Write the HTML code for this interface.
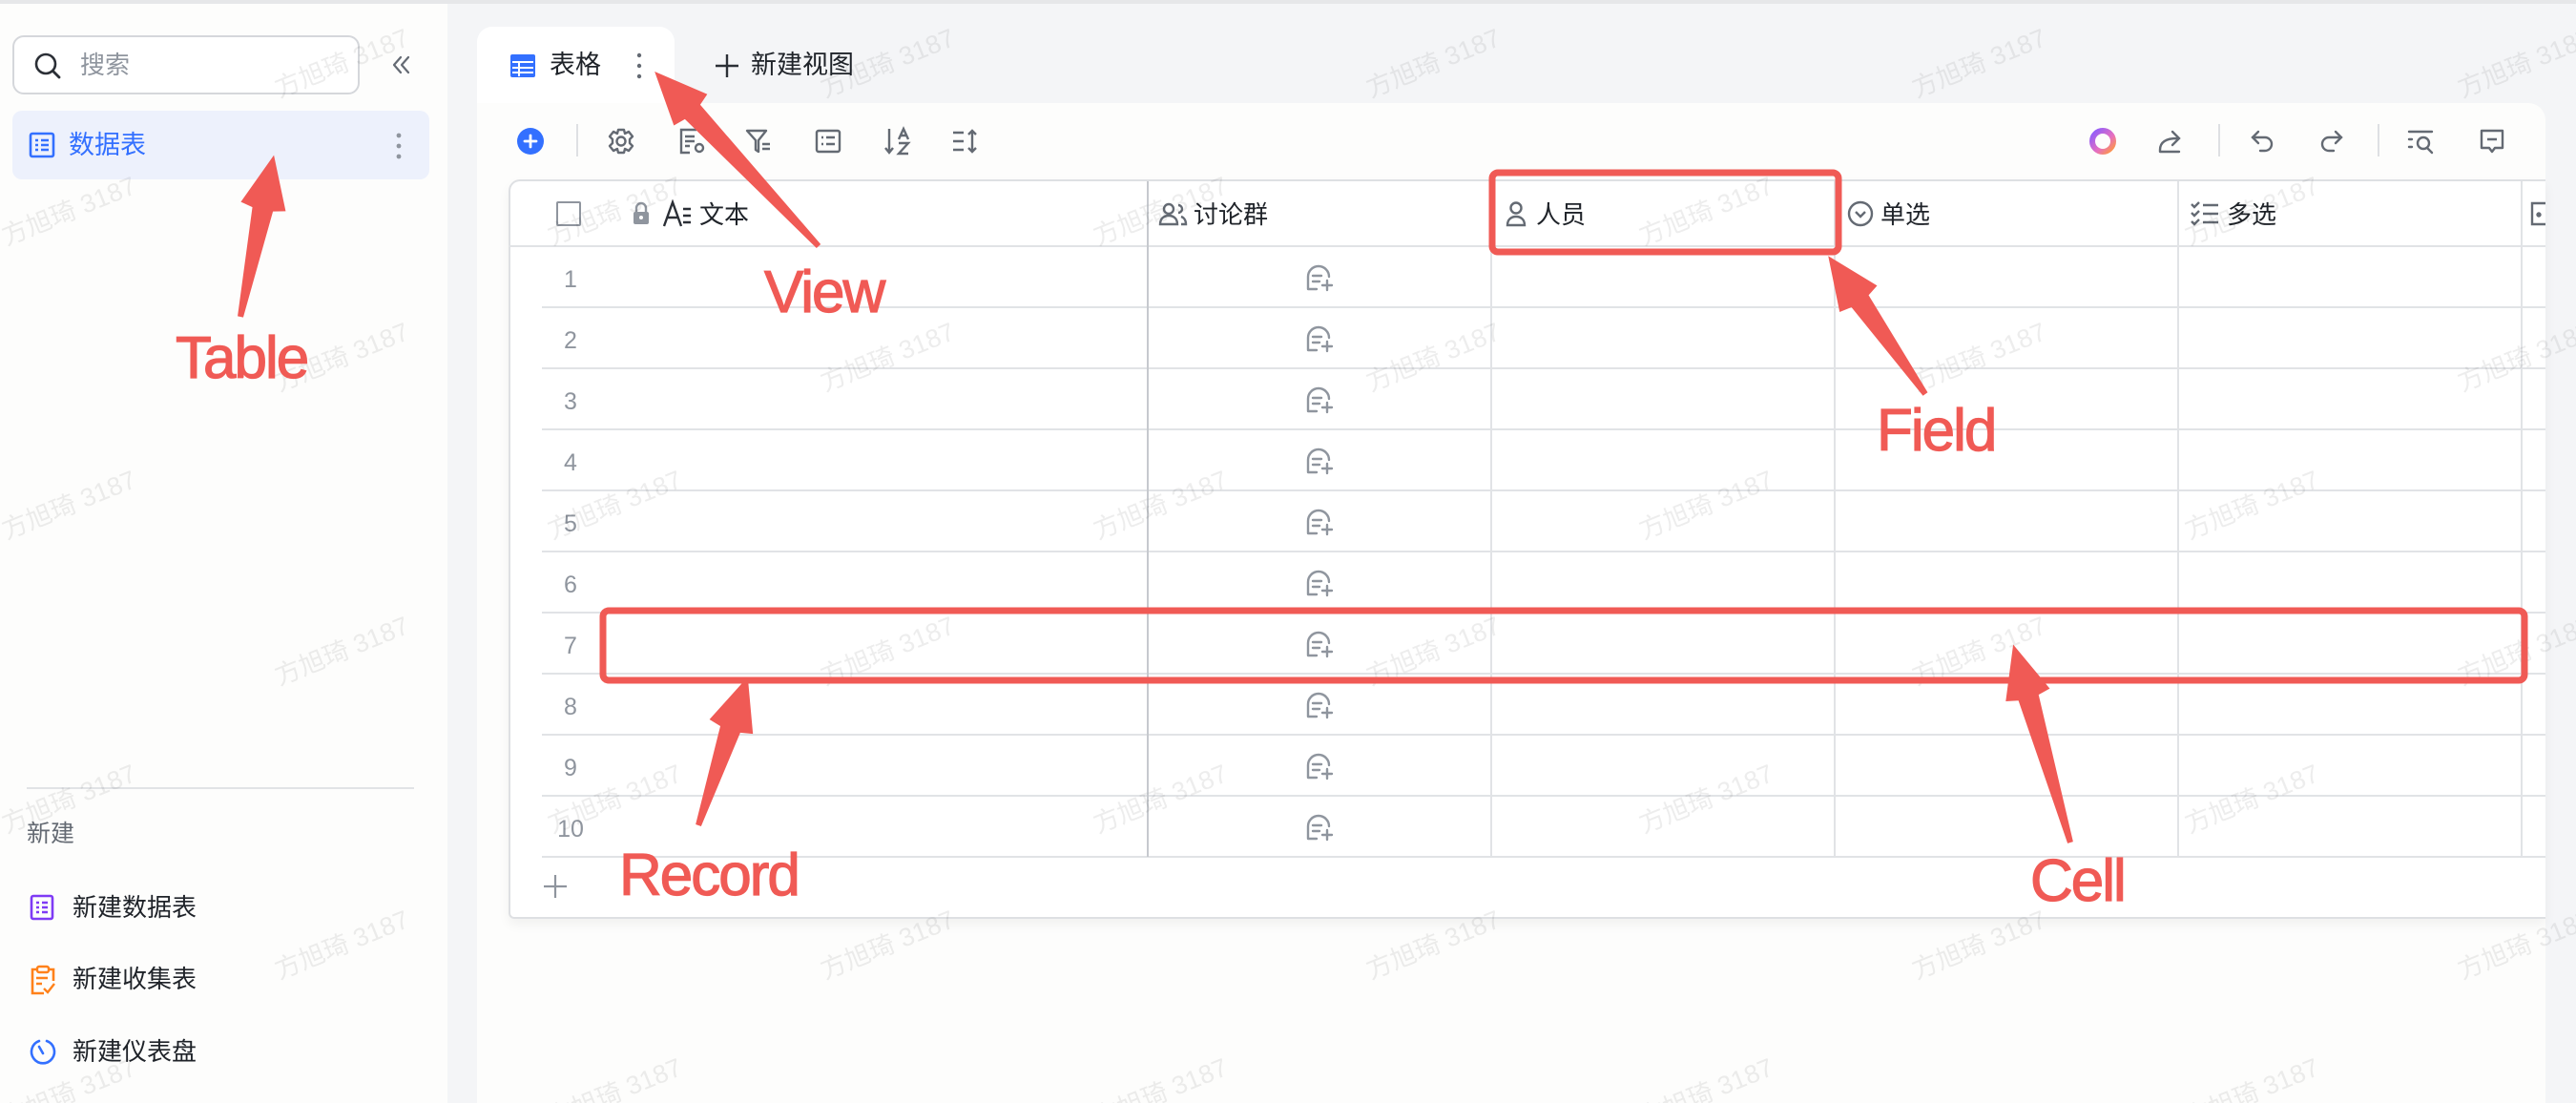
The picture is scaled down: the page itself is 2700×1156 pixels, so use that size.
<!DOCTYPE html>
<html><head><meta charset="utf-8">
<style>
*{margin:0;padding:0;box-sizing:border-box}
body{width:2700px;height:1156px;overflow:hidden;position:relative;background:#f4f5f7;font-family:"Liberation Sans","Noto Sans CJK SC",sans-serif;color:#1f2329}
.abs{position:absolute}
.t{position:absolute;font-size:26px;line-height:30px;white-space:nowrap}
.hl{position:absolute;height:2px;background:#e1e3e6}
.vl{position:absolute;width:2px;background:#e1e3e6}
.num{position:absolute;left:578px;width:40px;text-align:center;font-size:25px;color:#8f959e;line-height:30px}
.ic{position:absolute}
</style></head><body>
<div class="abs" style="left:0;top:0;width:2700px;height:4px;background:#e6e7e9"></div>
<div class="abs" style="left:0;top:4px;width:469px;height:1152px;background:#fdfdfc"></div>
<div class="abs" style="left:13px;top:37px;width:364px;height:62px;border:2px solid #d5d7db;border-radius:12px;background:#fff"></div>
<svg class="ic" style="left:34px;top:53px" width="32" height="32" viewBox="0 0 32 32"><circle cx="14" cy="14" r="10" fill="none" stroke="#2b2f36" stroke-width="2.6"/><path d="M21.5 21.5 L28 28" stroke="#2b2f36" stroke-width="2.8" stroke-linecap="round"/></svg>
<div class="t" style="left:84px;top:53px;color:#8f959e">搜索</div>
<svg class="ic" style="left:408px;top:55px" width="26" height="26" viewBox="0 0 26 26"><path d="M12 5 L5 13 L12 21 M20 5 L13 13 L20 21" fill="none" stroke="#646a73" stroke-width="2.2" stroke-linecap="round" stroke-linejoin="round"/></svg>
<div class="abs" style="left:13px;top:116px;width:437px;height:72px;background:#edf1fc;border-radius:10px"></div>
<svg class="ic" style="left:30px;top:138px" width="28" height="28" viewBox="0 0 28 28"><rect x="2" y="2" width="24" height="24" rx="2" fill="none" stroke="#3370ff" stroke-width="2.6"/><path d="M7 9h3M13 9h8M7 14h3M13 14h8M7 19h3M13 19h8" stroke="#3370ff" stroke-width="2.4"/></svg>
<div class="t" style="left:72px;top:137px;color:#3370ff;font-size:27px">数据表</div>
<svg class="ic" style="left:412px;top:138px" width="12" height="30" viewBox="0 0 12 30"><circle cx="6" cy="4" r="2.4" fill="#8f959e"/><circle cx="6" cy="15" r="2.4" fill="#8f959e"/><circle cx="6" cy="26" r="2.4" fill="#8f959e"/></svg>
<div class="abs" style="left:28px;top:825px;width:406px;height:2px;background:#e1e3e6"></div>
<div class="t" style="left:28px;top:859px;color:#646a73;font-size:25px">新建</div>
<svg class="ic" style="left:30px;top:937px" width="28" height="28" viewBox="0 0 28 28"><rect x="3" y="2" width="22" height="24" rx="2" fill="none" stroke="#7f3bf5" stroke-width="2.6"/><path d="M8 9h3M14 9h6M8 14h3M14 14h6M8 19h3M14 19h6" stroke="#7f3bf5" stroke-width="2.4"/></svg>
<div class="t" style="left:76px;top:936px">新建数据表</div>
<svg class="ic" style="left:30px;top:1011px" width="30" height="32" viewBox="0 0 30 32"><path d="M9 5H4v25h12M21 5h5v12" fill="none" stroke="#ff811a" stroke-width="2.6"/><rect x="9" y="2" width="12" height="6" rx="2" fill="none" stroke="#ff811a" stroke-width="2.4"/><path d="M8 14h12M8 20h6M16 25l4 4 7-9" fill="none" stroke="#ff811a" stroke-width="2.4"/></svg>
<div class="t" style="left:76px;top:1011px">新建收集表</div>
<svg class="ic" style="left:30px;top:1087px" width="30" height="30" viewBox="0 0 30 30"><path d="M11 4 A12 12 0 1 0 19 4" fill="none" stroke="#3370ff" stroke-width="2.6" stroke-linecap="round"/><path d="M11 10 L15 17" stroke="#3370ff" stroke-width="2.6" stroke-linecap="round"/></svg>
<div class="t" style="left:76px;top:1087px">新建仪表盘</div>

<div class="abs" style="left:500px;top:28px;width:207px;height:100px;background:#fff;border-radius:16px 16px 0 0"></div>
<svg class="ic" style="left:534px;top:55px" width="28" height="28" viewBox="0 0 28 28"><rect x="1" y="2" width="26" height="24" rx="2" fill="#3370ff"/><path d="M3 10h22M3 16h22M3 21h22M10 10v15" stroke="#fff" stroke-width="2"/></svg>
<div class="t" style="left:576px;top:53px;font-size:27px">表格</div>
<svg class="ic" style="left:664px;top:54px" width="12" height="30" viewBox="0 0 12 30"><circle cx="6" cy="4" r="2.2" fill="#646a73"/><circle cx="6" cy="15" r="2.2" fill="#646a73"/><circle cx="6" cy="26" r="2.2" fill="#646a73"/></svg>
<svg class="ic" style="left:748px;top:55px" width="28" height="28" viewBox="0 0 28 28"><path d="M14 2v24M2 14h24" stroke="#2b2f36" stroke-width="2.4"/></svg>
<div class="t" style="left:787px;top:53px;font-size:27px">新建视图</div>

<div class="abs" style="left:500px;top:108px;width:2168px;height:1048px;background:#fdfdfc;border-radius:0 18px 0 0"></div>
<div class="abs" style="left:533px;top:188px;width:2135px;height:775px;background:#fff;box-shadow:0 6px 12px rgba(0,0,0,0.05);border-radius:12px 0 0 6px"></div>
<svg class="ic" style="left:541px;top:133px" width="30" height="30" viewBox="0 0 30 30"><circle cx="15" cy="15" r="14" fill="#3370ff"/><path d="M15 9v12M9 15h12" stroke="#fff" stroke-width="2.8" stroke-linecap="round"/></svg>
<div class="abs" style="left:604px;top:130px;width:2px;height:34px;background:#dee0e3"></div>
<svg class="ic" style="left:636px;top:133px" width="30" height="30" viewBox="0 0 30 30" fill="none" stroke="#646a73" stroke-width="2.4" stroke-linejoin="round"><path d="M12 3h6l1 4 4-2 4 5-3 3 0 4 3 3-4 5-4-2-1 4h-6l-1-4-4 2-4-5 3-3 0-4-3-3 4-5 4 2z"/><circle cx="15" cy="15" r="4.5"/></svg>
<svg class="ic" style="left:710px;top:133px" width="32" height="30" viewBox="0 0 32 30" fill="none" stroke="#646a73" stroke-width="2.4"><path d="M20 3H4v24h9M8 10h10M8 15h10M8 20h5"/><circle cx="23" cy="22" r="4" /></svg>
<svg class="ic" style="left:780px;top:133px" width="32" height="30" viewBox="0 0 32 30" fill="none" stroke="#646a73" stroke-width="2.4" stroke-linejoin="round"><path d="M3 4h20l-8 10v12l-3-2V14z M19 18h8M19 23h8"/></svg>
<svg class="ic" style="left:853px;top:133px" width="30" height="30" viewBox="0 0 30 30" fill="none" stroke="#646a73" stroke-width="2.4"><rect x="3" y="4" width="24" height="22" rx="2"/><path d="M8 11h2M13 11h9M8 18h2M13 18h9"/></svg>
<svg class="ic" style="left:925px;top:131px" width="32" height="34" viewBox="0 0 32 34" fill="none" stroke="#646a73" stroke-width="2.4"><path d="M7 4v24M3 24l4 5 4-5M17 15l5-11 5 11M19 11h6M17 19h10L17 30h10"/></svg>
<svg class="ic" style="left:996px;top:133px" width="32" height="30" viewBox="0 0 32 30" fill="none" stroke="#646a73" stroke-width="2.4"><path d="M3 6h11M3 15h11M3 24h11M23 4v22M19 8l4-4 4 4M19 22l4 4 4-4"/></svg>
<svg class="ic" style="left:2189px;top:133px" width="30" height="30" viewBox="0 0 30 30"><defs><linearGradient id="g" x1="0" y1="0" x2="1" y2="1"><stop offset="0" stop-color="#8a5cff"/><stop offset="0.6" stop-color="#e66fc0"/><stop offset="1" stop-color="#ff9a3c"/></linearGradient></defs><circle cx="15" cy="15" r="11" fill="none" stroke="url(#g)" stroke-width="6"/></svg>
<svg class="ic" style="left:2260px;top:133px" width="30" height="30" viewBox="0 0 30 30" fill="none" stroke="#646a73" stroke-width="2.4" stroke-linecap="round"><path d="M4 26v-2c0-8 6-12 18-12M17 5l7 7-7 7M4 26h20"/></svg>
<div class="abs" style="left:2325px;top:130px;width:2px;height:34px;background:#dee0e3"></div>
<svg class="ic" style="left:2357px;top:133px" width="30" height="30" viewBox="0 0 30 30" fill="none" stroke="#646a73" stroke-width="2.4" stroke-linecap="round"><path d="M10 5L4 11l6 6M4 11h13a7 7 0 0 1 0 14h-5"/></svg>
<svg class="ic" style="left:2428px;top:133px" width="30" height="30" viewBox="0 0 30 30" fill="none" stroke="#646a73" stroke-width="2.4" stroke-linecap="round"><path d="M20 5l6 6-6 6M26 11H13a7 7 0 0 0 0 14h5"/></svg>
<div class="abs" style="left:2492px;top:130px;width:2px;height:34px;background:#dee0e3"></div>
<svg class="ic" style="left:2522px;top:133px" width="30" height="30" viewBox="0 0 30 30" fill="none" stroke="#646a73" stroke-width="2.4" stroke-linecap="round"><path d="M3 5h24M3 13h3M3 21h3"/><circle cx="18" cy="17" r="6"/><path d="M22 22l5 5"/></svg>
<svg class="ic" style="left:2597px;top:133px" width="30" height="30" viewBox="0 0 30 30" fill="none" stroke="#646a73" stroke-width="2.4" stroke-linejoin="round"><path d="M4 4h22v18H18l-3 4-3-4H4z M10 13h10"/></svg>

<div class="abs" style="left:533px;top:188px;width:2135px;height:775px;border-top:2px solid #dee0e3;border-left:2px solid #dee0e3;border-bottom:2px solid #dee0e3;border-radius:12px 0 0 6px"></div>
<div class="hl" style="left:533px;top:257px;width:2135px"></div>
<div class="hl" style="left:568px;top:321px;width:2100px"></div>
<div class="hl" style="left:568px;top:385px;width:2100px"></div>
<div class="hl" style="left:568px;top:449px;width:2100px"></div>
<div class="hl" style="left:568px;top:513px;width:2100px"></div>
<div class="hl" style="left:568px;top:577px;width:2100px"></div>
<div class="hl" style="left:568px;top:641px;width:2100px"></div>
<div class="hl" style="left:568px;top:705px;width:2100px"></div>
<div class="hl" style="left:568px;top:769px;width:2100px"></div>
<div class="hl" style="left:568px;top:833px;width:2100px"></div>
<div class="hl" style="left:568px;top:897px;width:2100px"></div>
<div class="vl" style="left:1202px;top:190px;height:708px;background:#c6c9ce"></div>
<div class="vl" style="left:1562px;top:190px;height:708px"></div>
<div class="vl" style="left:1922px;top:190px;height:708px"></div>
<div class="vl" style="left:2282px;top:190px;height:708px"></div>
<div class="vl" style="left:2642px;top:190px;height:708px"></div>
<div class="abs" style="left:583px;top:211px;width:26px;height:26px;border:2.5px solid #8f959e;border-radius:2px"></div>
<svg class="ic" style="left:661px;top:211px" width="22" height="26" viewBox="0 0 22 26"><path d="M6 11V7a5 5 0 0 1 10 0v4" fill="none" stroke="#8f959e" stroke-width="2.4"/><rect x="3" y="11" width="16" height="13" rx="2" fill="#8f959e"/><circle cx="11" cy="17" r="2" fill="#fff"/></svg>
<svg class="ic" style="left:694px;top:209px" width="34" height="30" viewBox="0 0 34 30" fill="none" stroke="#2b2f36" stroke-width="2.4"><path d="M2 28L11 3l9 25M5 19h12M22 10h8M22 17h8M22 24h8"/></svg>
<div class="t" style="left:733px;top:210px">文本</div>
<svg class="ic" style="left:1214px;top:211px" width="32" height="26" viewBox="0 0 32 26" fill="none" stroke="#646a73" stroke-width="2.4"><circle cx="11" cy="8" r="5"/><path d="M2 24c0-6 4-9 9-9s9 3 9 9z"/><path d="M21 4a4 4 0 0 1 0 8M24 16c3 1 5 4 5 8h-5"/></svg>
<div class="t" style="left:1251px;top:210px">讨论群</div>
<svg class="ic" style="left:1577px;top:210px" width="24" height="28" viewBox="0 0 24 28" fill="none" stroke="#646a73" stroke-width="2.4"><circle cx="12" cy="8" r="5.5"/><path d="M3 26c0-6 4-9 9-9s9 3 9 9z"/></svg>
<div class="t" style="left:1610px;top:210px">人员</div>
<svg class="ic" style="left:1936px;top:210px" width="28" height="28" viewBox="0 0 28 28" fill="none" stroke="#646a73" stroke-width="2.4"><circle cx="14" cy="14" r="12"/><path d="M9 12l5 5 5-5"/></svg>
<div class="t" style="left:1971px;top:210px">单选</div>
<svg class="ic" style="left:2295px;top:210px" width="32" height="28" viewBox="0 0 32 28" fill="none" stroke="#646a73" stroke-width="2.4"><path d="M2 4l3 3 5-5M2 13l3 3 5-5M2 22l3 3 5-5M14 5h16M14 14h16M14 23h16"/></svg>
<div class="t" style="left:2334px;top:210px">多选</div>
<svg class="ic" style="left:2652px;top:210px" width="16" height="28" viewBox="0 0 16 28" fill="none" stroke="#646a73" stroke-width="2.4"><path d="M16 3H2v22h14"/><circle cx="9" cy="15" r="1.5" fill="#646a73"/></svg>
<div class="num" style="top:278px">1</div>
<div class="num" style="top:342px">2</div>
<div class="num" style="top:406px">3</div>
<div class="num" style="top:470px">4</div>
<div class="num" style="top:534px">5</div>
<div class="num" style="top:598px">6</div>
<div class="num" style="top:662px">7</div>
<div class="num" style="top:726px">8</div>
<div class="num" style="top:790px">9</div>
<div class="num" style="top:854px">10</div>
<svg class="ic" style="left:568px;top:915px" width="28" height="28" viewBox="0 0 28 28"><path d="M14 2v24M2 14h24" stroke="#8f959e" stroke-width="2.2"/></svg>
<svg width="0" height="0" style="position:absolute"><defs><g id="chat" fill="none" stroke="#8f959e" stroke-width="2.4" stroke-linecap="round"><path d="M3 26V13a11 11 0 0 1 22 0M3 26h9M8 12h9M8 18h7M18 22h10M23 17v10"/></g></defs></svg>
<svg class="ic" style="left:1368px;top:277px" width="32" height="32"><use href="#chat"/></svg>
<svg class="ic" style="left:1368px;top:341px" width="32" height="32"><use href="#chat"/></svg>
<svg class="ic" style="left:1368px;top:405px" width="32" height="32"><use href="#chat"/></svg>
<svg class="ic" style="left:1368px;top:469px" width="32" height="32"><use href="#chat"/></svg>
<svg class="ic" style="left:1368px;top:533px" width="32" height="32"><use href="#chat"/></svg>
<svg class="ic" style="left:1368px;top:597px" width="32" height="32"><use href="#chat"/></svg>
<svg class="ic" style="left:1368px;top:661px" width="32" height="32"><use href="#chat"/></svg>
<svg class="ic" style="left:1368px;top:725px" width="32" height="32"><use href="#chat"/></svg>
<svg class="ic" style="left:1368px;top:789px" width="32" height="32"><use href="#chat"/></svg>
<svg class="ic" style="left:1368px;top:853px" width="32" height="32"><use href="#chat"/></svg>

<svg class="abs" style="left:0;top:0;pointer-events:none" width="2700" height="1156">
<defs><pattern id="wm" width="572" height="308" patternUnits="userSpaceOnUse">
<text x="359" y="68" transform="rotate(-22 359 68)" text-anchor="middle" dominant-baseline="middle" font-family="Liberation Sans, Noto Sans CJK SC, sans-serif" font-size="27" fill="rgba(0,0,0,0.07)">方旭琦 3187</text>
<text x="73" y="223" transform="rotate(-22 73 223)" text-anchor="middle" dominant-baseline="middle" font-family="Liberation Sans, Noto Sans CJK SC, sans-serif" font-size="27" fill="rgba(0,0,0,0.07)">方旭琦 3187</text>
<text x="645" y="223" transform="rotate(-22 645 223)" text-anchor="middle" dominant-baseline="middle" font-family="Liberation Sans, Noto Sans CJK SC, sans-serif" font-size="27" fill="rgba(0,0,0,0.07)">方旭琦 3187</text>
<text x="359" y="376" transform="rotate(-22 359 376)" text-anchor="middle" dominant-baseline="middle" font-family="Liberation Sans, Noto Sans CJK SC, sans-serif" font-size="27" fill="rgba(0,0,0,0.07)">方旭琦 3187</text>
</pattern></defs>
<rect width="2700" height="1156" fill="url(#wm)"/>
</svg>

<svg class="abs" style="left:0;top:0" width="2700" height="1156">
<g fill="none" stroke="#f05a55" stroke-width="7">
<rect x="1564" y="181" width="363" height="83" rx="6"/>
<rect x="632" y="640" width="2014" height="73" rx="6"/>
</g>
<g fill="#f05a55">
<g transform="translate(252,332) rotate(11.7)"><polygon points="-3,0 -11,-115 -24,-118 0,-173 24,-118 11,-115 3,0"/></g>
<g transform="translate(858,258) rotate(-43.2)"><polygon points="-3,0 -11,-193 -24,-196 0,-251 24,-196 11,-193 3,0"/></g>
<g transform="translate(2018,413) rotate(-35.1)"><polygon points="-3,0 -11,-119 -24,-122 0,-177 24,-122 11,-119 3,0"/></g>
<g transform="translate(732,865) rotate(18.4)"><polygon points="-3,0 -11,-106 -24,-109 0,-164 24,-109 11,-106 3,0"/></g>
<g transform="translate(2170,883) rotate(-16.1)"><polygon points="-3,0 -11,-158 -24,-161 0,-216 24,-161 11,-158 3,0"/></g>
</g>
<g fill="#f05a55" stroke="#f05a55" stroke-width="1.2" font-family="Liberation Sans, sans-serif" font-size="62" letter-spacing="-2">
<text x="184" y="396">Table</text>
<text x="801" y="327">View</text>
<text x="1967" y="472">Field</text>
<text x="649" y="938">Record</text>
<text x="2128" y="944">Cell</text>
</g>
</svg>
</body></html>
